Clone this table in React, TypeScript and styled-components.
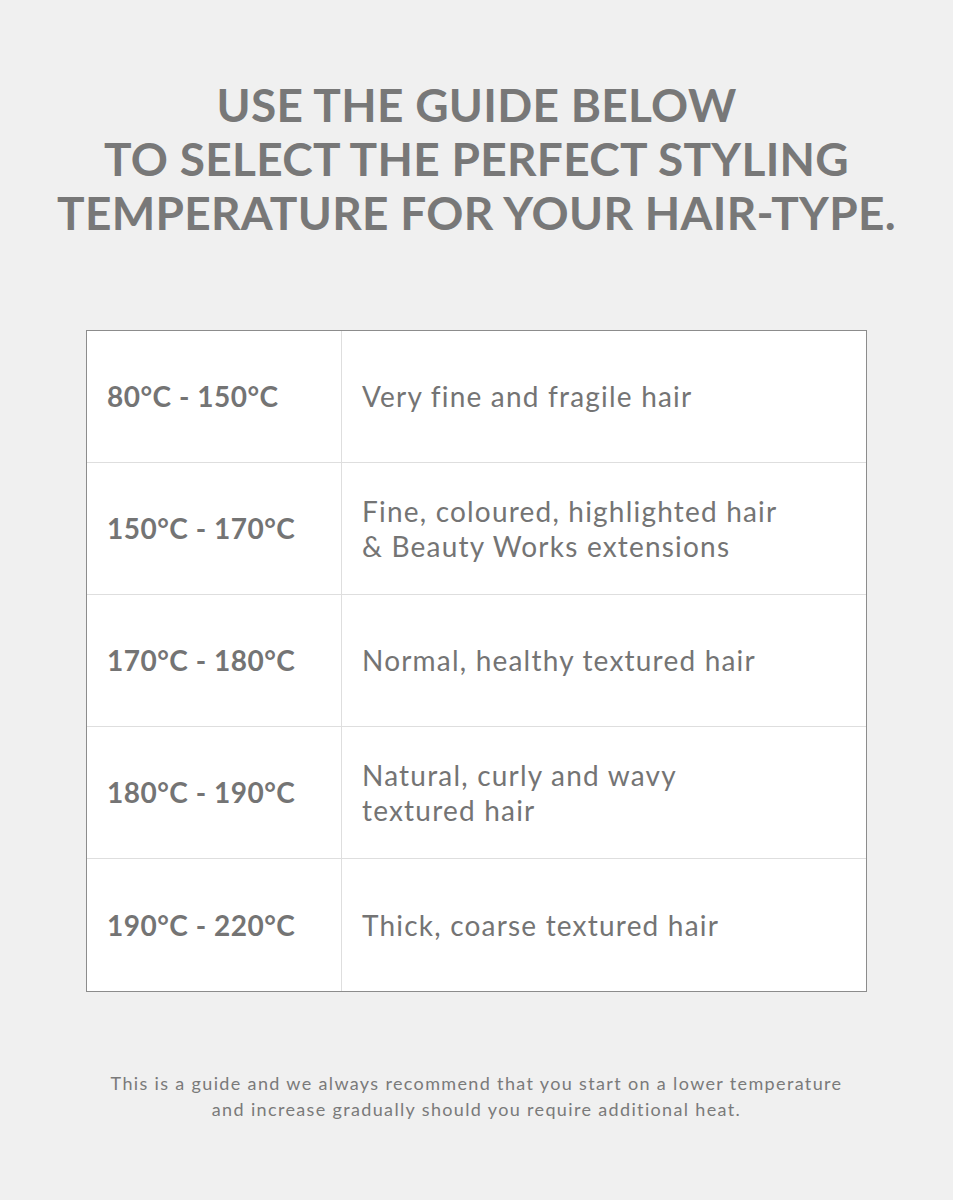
import React from "react";
import styled, { createGlobalStyle } from "styled-components";

const Global = createGlobalStyle`
  html, body { margin: 0; padding: 0; background: #f0f0f0; }
  body { font-family: "Lato", "Liberation Sans", sans-serif; }
`;

const Page = styled.div`
  width: 953px;
  height: 1200px;
  background: #f0f0f0;
  display: flex;
  flex-direction: column;
  align-items: center;
  padding-top: 78px;
  box-sizing: border-box;
`;

const Heading = styled.h1`
  margin: 0;
  font-family: "Lato", sans-serif;
  font-weight: 700;
  font-size: 46px;
  line-height: 54px;
  letter-spacing: 0.3px;
  white-space: nowrap;
  color: #787878;
  text-align: center;
  text-transform: uppercase;
`;

const Table = styled.div`
  margin-top: 90px;
  width: 781px;
  box-sizing: border-box;
  background: #ffffff;
  border: 1px solid #8c8c8c;
  display: grid;
  grid-template-columns: 255px 1fr;
`;

const Cell = styled.div<{ $last: boolean; $left?: boolean }>`
  height: 132px;
  display: flex;
  align-items: center;
  box-sizing: border-box;
  padding-left: ${(p) => (p.$left ? "20px" : "20px")};
  border-bottom: ${(p) => (p.$last ? "none" : "1px solid #dedede")};
  border-right: ${(p) => (p.$left ? "1px solid #dedede" : "none")};
  color: #747474;
  font-size: 28px;
  line-height: 35px;
  letter-spacing: ${(p) => (p.$left ? "0.5px" : "1.2px")};
  font-weight: ${(p) => (p.$left ? 700 : 400)};
`;

const Footer = styled.p`
  margin: 78px 0 0;
  font-size: 18px;
  line-height: 26px;
  letter-spacing: 1.35px;
  white-space: nowrap;
  color: #7a7a7a;
  text-align: center;
`;

const rows: [string, React.ReactNode][] = [
  ["80°C - 150°C", "Very fine and fragile hair"],
  ["150°C - 170°C", <>Fine, coloured, highlighted hair<br />&amp; Beauty Works extensions</>],
  ["170°C - 180°C", "Normal, healthy textured hair"],
  ["180°C - 190°C", <>Natural, curly and wavy<br />textured hair</>],
  ["190°C - 220°C", "Thick, coarse textured hair"],
];

export default function App() {
  return (
    <Page>
      <Global />
      <Heading>
        Use the guide below<br />
        to select the perfect styling<br />
        temperature for your hair-type.
      </Heading>
      <Table>
        {rows.map(([t, d], i) => (
          <React.Fragment key={i}>
            <Cell $left $last={i === rows.length - 1}>{t}</Cell>
            <Cell $last={i === rows.length - 1}>{d}</Cell>
          </React.Fragment>
        ))}
      </Table>
      <Footer>
        This is a guide and we always recommend that you start on a lower temperature<br />
        and increase gradually should you require additional heat.
      </Footer>
    </Page>
  );
}
